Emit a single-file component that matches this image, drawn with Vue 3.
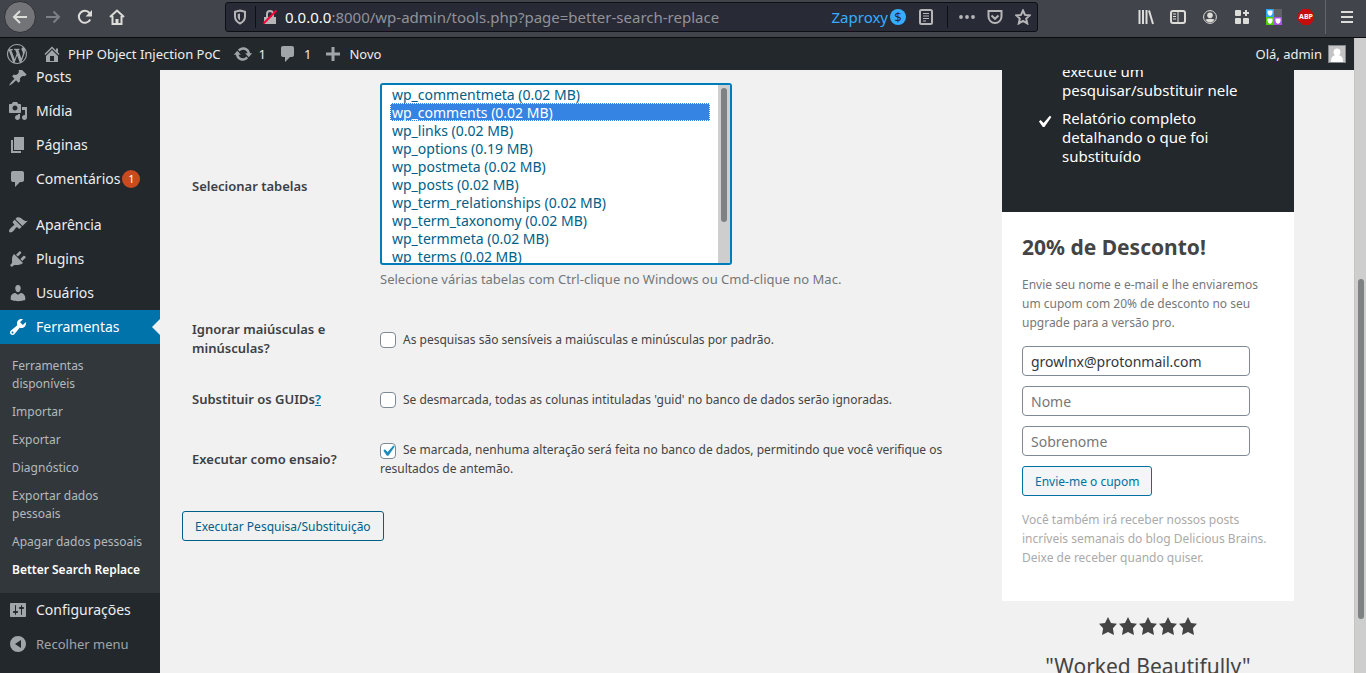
<script setup>
import { ref } from 'vue'

const icons = {
  wordpress: 'M20 10c0-5.51-4.49-10-10-10C4.48 0 0 4.49 0 10c0 5.52 4.48 10 10 10 5.51 0 10-4.48 10-10zM7.78 15.37L4.37 6.22c.55-.02 1.17-.08 1.17-.08.5-.06.44-1.13-.06-1.11 0 0-1.45.11-2.37.11-.18 0-.37 0-.58-.01C4.12 2.69 6.87 1.11 10 1.11c2.33 0 4.45.87 6.05 2.34-.68-.11-1.65.39-1.65 1.58 0 .74.45 1.36.9 2.1.35.61.55 1.36.55 2.46 0 1.49-1.4 5-1.4 5l-3.03-8.37c.54-.02.82-.17.82-.17.5-.05.44-1.25-.06-1.22 0 0-1.44.12-2.38.12-.87 0-2.33-.12-2.33-.12-.5-.03-.56 1.2-.06 1.22l.92.08 1.26 3.41zM17.41 10c.24-.64.74-1.87.43-4.25.7 1.29 1.05 2.71 1.05 4.25 0 3.29-1.73 6.24-4.4 7.78.97-2.59 1.94-5.2 2.92-7.78zM6.1 18.09C3.12 16.65 1.11 13.53 1.11 10c0-1.3.23-2.48.72-3.59C3.25 10.3 4.67 14.2 6.1 18.09zm4.03-6.63l2.58 6.98c-.86.29-1.76.45-2.71.45-.79 0-1.57-.11-2.29-.33.81-2.38 1.62-4.74 2.42-7.1z',
  home: 'M16 8.5l1.53 1.53-1.06 1.06L10 4.6l-6.47 6.49-1.06-1.06L10 2.5l4 4v-2h2v4zm-6-2.46l6 5.99V18H4v-5.97zM12 17v-5H8v5h4z',
  update: 'M10.2 3.28c3.53 0 6.43 2.61 6.92 6h2.08l-3.5 4-3.5-4h2.32c-.45-1.97-2.21-3.45-4.32-3.45-1.45 0-2.73.71-3.54 1.78L4.95 5.66C6.23 4.2 8.11 3.28 10.2 3.28zm-.4 13.44c-3.52 0-6.43-2.61-6.92-6H.8l3.5-4c1.17 1.33 2.33 2.67 3.5 4H5.48c.45 1.97 2.21 3.45 4.32 3.45 1.45 0 2.73-.71 3.54-1.78l1.71 1.95c-1.28 1.46-3.15 2.38-5.25 2.38z',
  comments: 'M5 2h9c1.1 0 2 .9 2 2v7c0 1.1-.9 2-2 2h-2l-5 5v-5H5c-1.1 0-2-.9-2-2V4c0-1.1.9-2 2-2z',
  plus: 'M17 8.5v3h-5.5V17h-3v-5.500H3v-3h5.500V3h3v5.500z',
  post: 'M10.44 3.02l1.82-1.82 6.36 6.35-1.83 1.82c-1.05-.68-2.48-.57-3.41.36l-.75.75c-.92.93-1.04 2.35-.35 3.41l-1.83 1.82-2.41-2.41-2.8 2.79c-.42.42-3.38 2.71-3.8 2.29s1.86-3.39 2.28-3.81l2.79-2.79L4.1 9.36l1.83-1.82c1.05.69 2.48.57 3.4-.36l.75-.75c.93-.92 1.05-2.35.36-3.41z',
  media: 'M13 11V4c0-.55-.45-1-1-1h-1.67L9 1H5L3.67 3H2c-.55 0-1 .45-1 1v7c0 .55.45 1 1 1h10c.55 0 1-.45 1-1zM7 4.500c1.38 0 2.5 1.12 2.5 2.5S8.38 9.500 7 9.500 4.500 8.380 4.500 7 5.620 4.500 7 4.500zM14 6h5v10.500c0 1.380-1.120 2.500-2.500 2.500S14 17.880 14 16.500s1.120-2.500 2.500-2.500c.17 0 .34.02.5.05V9h-3V6zm-4 8.050V13h2v3.500c0 1.380-1.120 2.500-2.500 2.500S7 17.880 7 16.500 8.120 14 9.500 14c.17 0 .34.02.5.05z',
  page: 'M6 15V2h10v13H6zm-1 1h8v2H3V5h2v11z',
  appearance: 'M14.48 11.06L7.41 3.99l1.5-1.5c.5-.56 2.3-.47 3.51.32 1.21.8 1.43 1.28 2.91 2.1 1.18.64 2.45 1.26 4.45.85zm-.71.71L6.7 4.7 4.93 6.47c-.39.39-.39 1.02 0 1.41l1.06 1.06c.39.39.39 1.03 0 1.42-.6.6-1.43 1.11-2.21 1.69-.35.26-.7.53-1.01.84C1.43 14.23.4 16.08 1.4 17.07c.99 1 2.84-.03 4.18-1.36.31-.31.58-.66.85-1.02.57-.78 1.08-1.61 1.69-2.21.39-.39 1.02-.39 1.41 0l1.06 1.06c.39.39 1.02.39 1.41 0z',
  plugins: 'M13.11 4.36L9.87 7.6 8 5.73l3.24-3.24c.35-.34 1.05-.2 1.56.32.52.51.66 1.21.31 1.55zm-8 1.77l.91-1.12 9.01 9.01-1.19.84c-.71.71-2.63 1.16-3.82 1.16H6.14L4.9 17.26c-.59.59-1.54.59-2.12 0-.59-.58-.59-1.53 0-2.12l1.24-1.24v-3.88c0-1.13.4-3.19 1.09-3.89zm7.26 3.97l3.24-3.24c.34-.35 1.04-.21 1.55.31.52.51.66 1.21.31 1.55l-3.24 3.25z',
  users: 'M10 9.25c-2.27 0-2.73-3.44-2.73-3.44C7 4.02 7.82 2 9.97 2c2.16 0 2.98 2.02 2.71 3.81 0 0-.41 3.44-2.68 3.44zm0 2.57L12.72 10c2.39 0 4.52 2.33 4.52 4.53v2.49s-3.65 1.13-7.24 1.13c-3.65 0-7.24-1.13-7.24-1.13v-2.49c0-2.25 1.94-4.48 4.47-4.48z',
  tools: 'M16.68 9.77c-1.34 1.34-3.3 1.67-4.95.99l-5.41 6.52c-.99.99-2.59.99-3.58 0s-.99-2.59 0-3.57l6.52-5.42c-.68-1.65-.35-3.61.99-4.95 1.28-1.28 3.12-1.62 4.72-1.06l-2.89 2.89 2.82 2.82 2.86-2.87c.53 1.58.18 3.39-1.08 4.65zM3.81 16.21c.4.39 1.04.39 1.43 0 .4-.4.4-1.04 0-1.43-.39-.4-1.03-.4-1.43 0-.39.39-.39 1.03 0 1.43z',
  settings: 'M18 16V4c0-.55-.45-1-1-1H3c-.55 0-1 .45-1 1v12c0 .55.45 1 1 1h14c.55 0 1-.45 1-1zM8 11h1c.55 0 1 .45 1 1s-.45 1-1 1H8v1.5c0 .28-.22.5-.5.5s-.5-.22-.5-.5V13H6c-.55 0-1-.45-1-1s.45-1 1-1h1V5.5c0-.28.22-.5.5-.5s.5.22.5.5V11zm5-2h-1c-.55 0-1-.45-1-1s.45-1 1-1h1V5.5c0-.28.22-.5.5-.5s.5.22.5.5V7h1c.55 0 1 .45 1 1s-.45 1-1 1h-1v5.5c0 .28-.22.5-.5.5s-.5-.22-.5-.5V9z',
  collapse: 'M10 2a8 8 0 1 0 0 16 8 8 0 0 0 0-16zM13 6v8l-6-4z',
  star: 'M10 1l3 6 6 .75-4.120 4.620L16 19l-6-3-6 3 1.130-6.630L1 7.750 7 7z',
  check: 'M14.83 4.890l1.340.94-5.810 8.380H9.020L5.780 9.670l1.340-1.250 2.570 2.400z'
}

const menuTop = [
  { label: 'Posts', icon: 'post' },
  { label: 'Mídia', icon: 'media' },
  { label: 'Páginas', icon: 'page' },
  { label: 'Comentários', icon: 'comments', badge: 1 }
]
const menuMiddle = [
  { label: 'Aparência', icon: 'appearance' },
  { label: 'Plugins', icon: 'plugins' },
  { label: 'Usuários', icon: 'users' },
  { label: 'Ferramentas', icon: 'tools', current: true }
]
const submenu = [
  'Ferramentas disponíveis',
  'Importar',
  'Exportar',
  'Diagnóstico',
  'Exportar dados pessoais',
  'Apagar dados pessoais',
  'Better Search Replace'
]
const tables = [
  ['wp_commentmeta', '0.02'],
  ['wp_comments', '0.02'],
  ['wp_links', '0.02'],
  ['wp_options', '0.19'],
  ['wp_postmeta', '0.02'],
  ['wp_posts', '0.02'],
  ['wp_term_relationships', '0.02'],
  ['wp_term_taxonomy', '0.02'],
  ['wp_termmeta', '0.02'],
  ['wp_terms', '0.02']
]

const selectedTables = ref(['wp_comments'])
const caseInsensitive = ref(false)
const replaceGuids = ref(false)
const dryRun = ref(true)
const email = ref('growlnx@protonmail.com')
const firstName = ref('')
const lastName = ref('')
</script>

<template>
  <div class="window">
    <header class="chrome">
      <nav class="chrome-nav" aria-label="Navegação">
        <button class="tool back" type="button" aria-label="Voltar">
          <svg viewBox="0 0 16 16"><path d="M15 8H2M8 2L2 8l6 6" /></svg>
        </button>
        <button class="tool forward" type="button" aria-label="Avançar">
          <svg viewBox="0 0 16 16"><path d="M1 8h13M8.500 2.500L14 8l-5.500 5.500" /></svg>
        </button>
        <button class="tool" type="button" aria-label="Recarregar">
          <svg viewBox="0 0 16 16"><path d="M13.200 10.500A6 6 0 1 1 12.500 4" /><path class="solid" d="M15 1v6.500H8.500z" /></svg>
        </button>
        <button class="tool" type="button" aria-label="Início">
          <svg viewBox="0 0 16 16"><path d="M1 8l7-6.500L15 8M3.500 7v8h9V7" /><path class="solid" d="M6.500 15v-5h3v5z" /></svg>
        </button>
      </nav>

      <div class="urlbar">
        <button class="mini shield" type="button" aria-label="Proteção">
          <svg viewBox="0 0 16 16"><path d="M8 1.500l5 1.300v4.700c0 3.200-2 5.500-5 7-3-1.500-5-3.800-5-7V2.800z" /><path class="solid" d="M8 4.500v7c-1.500-1-2.300-2.300-2.300-4V5z" /></svg>
        </button>
        <span class="rule"></span>
        <button class="mini lock" type="button" aria-label="Conexão não segura">
          <svg viewBox="0 0 16 16"><path class="solid" d="M2 8h12v7H2z" /><path d="M5 8V5a3 3 0 0 1 6 0v3" /><path class="slash" d="M1.500 14.500l13-13" /></svg>
        </button>
        <span class="url"><b>0.0.0.0</b>:8000/wp-admin/tools.php?page=better-search-replace</span>
        <span class="container-name">Zaproxy</span>
        <span class="container-icon">$</span>
        <button class="mini reader" type="button" aria-label="Modo de leitura">
          <svg viewBox="0 0 16 16"><rect x="2" y="1" width="12" height="14" rx="1.500" /><path class="thin" d="M5 4.500h6M5 7h6M5 9.500h6M5 12h3" /></svg>
        </button>
        <span class="rule"></span>
        <button class="mini more" type="button" aria-label="Mais ações">
          <svg viewBox="0 0 16 16"><g class="solid"><circle cx="2" cy="8" r="1.900" /><circle cx="8" cy="8" r="1.900" /><circle cx="14" cy="8" r="1.900" /></g></svg>
        </button>
        <button class="mini" type="button" aria-label="Salvar no Pocket">
          <svg viewBox="0 0 16 16"><path d="M1.500 2h13v5.500a6.500 6.500 0 0 1-13 0z" /><path d="M4.500 6.500L8 9.800l3.500-3.300" /></svg>
        </button>
        <button class="mini" type="button" aria-label="Favoritar">
          <svg viewBox="0 0 16 16"><path d="M8 1.500l2 4.400 4.700.5-3.500 3.200 1 4.800L8 12l-4.200 2.400 1-4.800L1.300 6.400 6 5.900z" /></svg>
        </button>
      </div>

      <div class="chrome-tools">
        <button class="tool" type="button" aria-label="Biblioteca">
          <svg viewBox="0 0 16 16"><path d="M1.500 1v14M5 1v14M8.500 1v14M11 1.500L15 15" /></svg>
        </button>
        <button class="tool" type="button" aria-label="Painel lateral">
          <svg viewBox="0 0 16 16"><rect x="1" y="2" width="14" height="12" rx="2" /><path class="thin" d="M8 2v12M3 5h3M3 7.500h3M3 10h3" /></svg>
        </button>
        <button class="tool" type="button" aria-label="Conta">
          <svg viewBox="0 0 16 16"><circle class="thin" cx="8" cy="8" r="6.400" /><g class="solid"><circle cx="8" cy="6.200" r="2.800" /><path d="M3.500 10.500q4.500-1.600 9 0-1.500 3-4.500 3t-4.500-3z" /></g></svg>
        </button>
        <button class="tool" type="button" aria-label="Extensões">
          <svg viewBox="0 0 16 16"><g class="solid"><rect x="1" y="1" width="6" height="6" rx="1" /><rect x="1" y="9" width="6" height="6" rx="1" /><rect x="9" y="9" width="6" height="6" rx="1" /></g><path d="M12 1v6M9 4h6" /></svg>
        </button>
        <button class="tool" type="button" aria-label="Contêineres">
          <svg viewBox="0 0 16 16" class="flat"><rect width="8" height="8" fill="#2aa6f5" /><rect x="8" width="8" height="8" fill="#606067" /><rect y="8" width="8" height="8" fill="#51cd00" /><rect x="8" y="8" width="8" height="8" fill="#ac51e8" /><g fill="#fff"><path d="M1.500 1.500h5v2.500q0 2-2.500 3-2.500-1-2.500-3z" /><path d="M1.500 9.500h5V12q0 2-2.500 3-2.500-1-2.500-3z" /><path d="M9.500 9.500h5V12q0 2-2.500 3-2.500-1-2.500-3z" /></g></svg>
        </button>
        <button class="tool" type="button" aria-label="Adblock Plus"><span class="abp">ABP</span></button>
        <span class="rule light"></span>
        <button class="tool burger" type="button" aria-label="Menu">
          <svg viewBox="0 0 16 16"><path d="M2 3h12M2 8h12M2 13h12" /></svg>
        </button>
      </div>
    </header>

    <div class="viewport">
      <div class="page">
        <div class="adminbar">
          <a href="#" class="logo" aria-label="Sobre o WordPress"><svg class="dash" viewBox="0 0 20 20"><path :d="icons.wordpress" /></svg></a>
          <a href="#"><svg class="dash" viewBox="0 0 20 20"><path :d="icons.home" /></svg>PHP Object Injection PoC</a>
          <a href="#"><svg class="dash" viewBox="0 0 20 20"><path :d="icons.update" /></svg>1</a>
          <a href="#"><svg class="dash" viewBox="0 0 20 20"><path :d="icons.comments" /></svg>1</a>
          <a href="#"><svg class="dash" viewBox="0 0 20 20"><path :d="icons.plus" /></svg>Novo</a>
          <a href="#" class="account">Olá, admin
            <svg class="avatar" viewBox="0 0 16 16"><rect width="16" height="16" fill="#c4c4c4" /><path fill="#fff" d="M8 2.500a3.400 3.400 0 0 1 3.400 3.500c0 1.400-.6 2.600-1.400 3.300 2.600.6 4 2.400 4 6.700H2c0-4.300 1.400-6.100 4-6.700-.8-.7-1.400-1.900-1.400-3.300A3.400 3.400 0 0 1 8 2.500z" /></svg>
          </a>
        </div>

        <div class="columns">
          <nav class="menu" aria-label="Menu principal">
            <a v-for="item in menuTop" :key="item.label" href="#" class="item">
              <svg class="dash" viewBox="0 0 20 20"><path :d="icons[item.icon]" /></svg>{{ item.label }}
              <span v-if="item.badge" class="badge">{{ item.badge }}</span>
            </a>
            <div class="separator"></div>
            <a v-for="item in menuMiddle" :key="item.label" href="#" class="item" :class="{ current: item.current }">
              <svg class="dash" viewBox="0 0 20 20"><path :d="icons[item.icon]" /></svg>{{ item.label }}
            </a>
            <div class="submenu">
              <a v-for="name in submenu" :key="name" href="#" :class="{ active: name === 'Better Search Replace' }">{{ name }}</a>
            </div>
            <a href="#" class="item"><svg class="dash" viewBox="0 0 20 20"><path :d="icons.settings" /></svg>Configurações</a>
            <button type="button" class="item collapse"><svg class="dash" viewBox="0 0 20 20"><path fill-rule="evenodd" :d="icons.collapse" /></svg>Recolher menu</button>
          </nav>

          <form class="form" @submit.prevent>
            <div class="row tall">
              <label class="heading" for="tables">Selecionar tabelas</label>
              <div>
                <div class="listbox">
                  <select id="tables" v-model="selectedTables" multiple size="10">
                    <option v-for="[name, size] in tables" :key="name" :value="name">{{ name }} ({{ size }} MB)</option>
                  </select>
                  <div class="list-track"><span class="thumb"></span></div>
                </div>
                <p class="description">Selecione várias tabelas com Ctrl-clique no Windows ou Cmd-clique no Mac.</p>
              </div>
            </div>
            <div class="row">
              <label class="heading" for="case">Ignorar maiúsculas e minúsculas?</label>
              <div>
                <span class="tick"><input id="case" v-model="caseInsensitive" type="checkbox" /></span>
                <label for="case">As pesquisas são sensíveis a maiúsculas e minúsculas por padrão.</label>
              </div>
            </div>
            <div class="row">
              <span class="heading"><label for="guid">Substituir os GUIDs</label><a href="#">?</a></span>
              <div>
                <span class="tick"><input id="guid" v-model="replaceGuids" type="checkbox" /></span>
                <label for="guid">Se desmarcada, todas as colunas intituladas 'guid' no banco de dados serão ignoradas.</label>
              </div>
            </div>
            <div class="row">
              <label class="heading" for="dry">Executar como ensaio?</label>
              <div>
                <span class="tick"><input id="dry" v-model="dryRun" type="checkbox" /><svg v-if="dryRun" viewBox="0 0 20 20"><path :d="icons.check" /></svg></span>
                <label for="dry">Se marcada, nenhuma alteração será feita no banco de dados, permitindo que você verifique os resultados de antemão.</label>
              </div>
            </div>
            <button class="button run" type="submit">Executar Pesquisa/Substituição</button>
          </form>

          <aside class="promo">
            <ul class="features">
              <li>execute um pesquisar/substituir nele</li>
              <li><svg viewBox="0 0 20 20"><path :d="icons.check" /></svg>Relatório completo detalhando o que foi substituído</li>
            </ul>
            <form class="coupon" @submit.prevent>
              <h2>20% de Desconto!</h2>
              <p>Envie seu nome e e-mail e lhe enviaremos um cupom com 20% de desconto no seu upgrade para a versão pro.</p>
              <input v-model="email" type="email" aria-label="E-mail" />
              <input v-model="firstName" type="text" placeholder="Nome" aria-label="Nome" />
              <input v-model="lastName" type="text" placeholder="Sobrenome" aria-label="Sobrenome" />
              <button class="button" type="submit">Envie-me o cupom</button>
              <p class="small">Você também irá receber nossos posts incríveis semanais do blog Delicious Brains. Deixe de receber quando quiser.</p>
            </form>
            <div class="stars">
              <svg v-for="n in 5" :key="n" viewBox="0 0 20 20"><path :d="icons.star" /></svg>
            </div>
            <p class="quote">"Worked Beautifully"</p>
          </aside>
        </div>
      </div>
      <div class="page-track"><span class="thumb"></span></div>
    </div>
  </div>
</template>

<style>
html,
body {
  overflow: hidden;
}
</style>

<style scoped>
* {
  box-sizing: border-box;
}
.window {
  height: 100vh;
  display: flex;
  flex-direction: column;
  overflow: hidden;
  font: 12px/19px "Noto Sans", sans-serif;
  color: #444;
  background: #f1f1f1;
}
a {
  color: inherit;
  text-decoration: none;
}
button,
input,
select {
  font-family: inherit;
  margin: 0;
}
p,
h2,
ul {
  margin: 0;
  padding: 0;
}

/* browser toolbar */
.chrome {
  flex: none;
  height: 38px;
  display: flex;
  background: #42444c;
  border-bottom: 1px solid #0c0c0d;
  padding-bottom: 3px;
}
.chrome-nav {
  width: 225px;
  flex: none;
  display: flex;
  align-items: center;
  padding-left: 4px;
}
.tool {
  width: 32px;
  height: 32px;
  padding: 0;
  border: 0;
  border-radius: 50%;
  background: none;
  display: flex;
  align-items: center;
  justify-content: center;
  color: #dcdcd8;
}
.tool svg,
.mini svg {
  width: 16px;
  height: 16px;
  fill: none;
  stroke: currentColor;
  stroke-width: 2;
}
.tool svg .solid,
.mini svg .solid {
  fill: currentColor;
  stroke: none;
}
.tool svg .thin,
.mini svg .thin {
  stroke-width: 1;
}
.tool svg.flat {
  stroke: none;
}
.tool.back {
  background: #737478;
  border: 1px solid #303136;
  margin-right: 1px;
}
.tool.forward {
  color: #7f8085;
}
.urlbar {
  flex: 1;
  min-width: 0;
  height: 30px;
  margin-top: 2px;
  padding-left: 6px;
  display: flex;
  align-items: center;
  background: #282a36;
  border: 1px solid #0e0f14;
  border-radius: 3px;
}
.mini {
  width: 28px;
  height: 24px;
  padding: 0;
  border: 0;
  background: none;
  display: flex;
  align-items: center;
  justify-content: center;
  color: #b6b6b8;
  flex: none;
}
.mini.shield {
  width: 16px;
  margin-right: 7px;
}
.mini.lock svg .slash {
  stroke: #ff0039;
}
.mini.reader {
  margin: 0 7px 0 6px;
}
.mini.more {
  margin-left: 5px;
}
.rule {
  width: 1px;
  height: 22px;
  background: #0e0f14;
  flex: none;
}
.url {
  flex: 1;
  min-width: 0;
  overflow: hidden;
  white-space: nowrap;
  margin-left: 1px;
  font-size: 15px;
  line-height: 24px;
  color: #929299;
}
.url b {
  font-weight: 400;
  color: #f9f9fa;
}
.container-name {
  font-size: 15px;
  color: #37adff;
}
.container-icon {
  width: 16px;
  height: 16px;
  margin-left: 2px;
  border-radius: 50%;
  background: #37adff;
  color: #282a36;
  font-size: 13px;
  line-height: 16px;
  text-align: center;
}
.chrome-tools {
  width: 328px;
  flex: none;
  display: flex;
  align-items: center;
  padding-left: 92px;
}
.rule.light {
  align-self: flex-start;
  margin: 0 5px 0 3px;
  height: 34px;
  background: #64666d;
}
.abp {
  width: 16px;
  height: 16px;
  background: #c70d09;
  clip-path: polygon(30% 0, 70% 0, 100% 30%, 100% 70%, 70% 100%, 30% 100%, 0 70%, 0 30%);
  color: #fff;
  font-size: 7px;
  font-weight: 700;
  line-height: 16px;
}

/* page frame */
.viewport {
  flex: 1;
  min-height: 0;
  display: flex;
}
.page {
  flex: 1;
  min-width: 0;
  display: flex;
  flex-direction: column;
}
.page-track {
  width: 12px;
  flex: none;
  display: grid;
  grid-template-rows: 241fr 340fr 54fr;
  justify-content: center;
  background: #cecece;
  border-left: 1px solid #c8c4bf;
}
.thumb {
  grid-row: 2;
  width: 6px;
  border-radius: 3px;
  background: #7e8282;
}
.dash {
  width: 20px;
  height: 20px;
  flex: none;
  fill: #a0a5aa;
}
.adminbar {
  flex: none;
  height: 32px;
  padding: 0 8px 0 7px;
  display: flex;
  align-items: center;
  gap: 12px;
  background: #23282d;
  color: #eee;
  font-size: 13px;
}
.adminbar a {
  display: flex;
  align-items: center;
  gap: 6px;
}
.adminbar .logo {
  margin-right: 3px;
}
.adminbar .account {
  margin-left: auto;
}
.avatar {
  width: 18px;
  height: 18px;
  border: 1px solid #82878c;
}
.columns {
  flex: 1;
  min-height: 0;
  display: flex;
  overflow: hidden;
}

/* admin menu */
.menu {
  width: 160px;
  flex: none;
  background: #23282d;
  color: #eee;
  font-size: 14px;
}
.menu::before {
  content: "";
  display: block;
  margin-top: -10px;
}
.item {
  width: 100%;
  height: 34px;
  padding: 0 8px 1px;
  display: flex;
  align-items: center;
  gap: 8px;
}
.badge {
  min-width: 18px;
  height: 18px;
  margin-left: -6px;
  border-radius: 9px;
  background: #ca4a1f;
  color: #fff;
  font-size: 11px;
  line-height: 18px;
  text-align: center;
}
.separator {
  height: 12px;
}
.item.current {
  position: relative;
  background: #0073aa;
  color: #fff;
}
.item.current .dash {
  fill: #fff;
}
.item.current::after {
  content: "";
  position: absolute;
  right: 0;
  top: 9px;
  border: 8px solid transparent;
  border-left: 0;
  border-right-color: #f1f1f1;
}
.submenu {
  padding: 8px 0 9px;
  background: #32373c;
  color: #b4b9be;
  font-size: 12px;
  line-height: 18px;
}
.submenu a {
  display: block;
  padding: 5px 12px;
}
.submenu a.active {
  color: #fff;
  font-weight: 600;
}
.collapse {
  border: 0;
  background: none;
  font-size: 13px;
  color: #a0a5aa;
}

/* search and replace form */
.form {
  flex: 1;
  min-width: 0;
  padding: 0 20px 0 22px;
}
.row {
  min-height: 60px;
  padding: 11px 10px;
  display: grid;
  grid-template-columns: 148px minmax(0, 1fr);
  column-gap: 40px;
  align-items: center;
}
.row.tall {
  margin-top: -5px;
  padding: 18px 10px 19px;
}
.heading {
  font-size: 13px;
  font-weight: 600;
  color: #3c4045;
}
.heading a {
  color: #0073aa;
  text-decoration: underline;
}
.listbox {
  width: 352px;
  max-width: 100%;
  height: 182px;
  display: flex;
  border: 2px solid #007cba;
  border-radius: 3px;
  background: #fff;
  overflow: hidden;
}
.listbox select {
  flex: 1;
  min-width: 0;
  height: 178px;
  padding: 0 8px;
  border: 0;
  outline: 0;
  background: #fff;
  color: #016087;
  font-size: 14px;
  scrollbar-width: none;
}
.listbox option {
  min-height: 18px;
  height: 18px;
  padding: 0 2px;
  line-height: 18px;
}
.listbox option:checked {
  background: linear-gradient(#3584e4, #3584e4);
  -webkit-text-fill-color: #fff;
  outline: 1px dotted #fff;
  outline-offset: -1px;
}
.list-track {
  width: 12px;
  display: grid;
  grid-template-rows: 3px 134px;
  justify-content: center;
  background: #cecece;
}
.description {
  margin-top: 4px;
  padding-bottom: 1px;
  font-size: 13px;
  line-height: 20px;
  color: #72777c;
}
.tick {
  position: relative;
  display: inline-block;
  width: 16px;
  height: 16px;
  margin-right: 4px;
  vertical-align: middle;
}
.tick + label {
  padding-left: 3px;
}
.tick input {
  appearance: none;
  display: block;
  width: 16px;
  height: 16px;
  border: 1px solid #7e8993;
  border-radius: 4px;
  background: #fff;
}
.tick svg {
  position: absolute;
  inset: -3px;
  width: 22px;
  height: 22px;
  fill: #1e8cbe;
  pointer-events: none;
}
.button {
  height: 30px;
  padding: 0 12px;
  border: 1px solid #0071a1;
  border-radius: 3px;
  background: #f3f5f6;
  color: #0071a1;
  font-size: 12px;
}
.run {
  margin-top: 22px;
  border-color: #016087;
  background: #f1f1f1;
  color: #016087;
}

/* promo column */
.promo {
  width: 292px;
  flex: none;
  margin-right: 60px;
}
.features {
  margin-top: -10px;
  padding: 2px 40px 46px 60px;
  list-style: none;
  background: #23282d;
  color: #fff;
  font-size: 15px;
}
.features li {
  position: relative;
}
.features li + li {
  margin-top: 9px;
}
.features svg {
  position: absolute;
  left: -30px;
  top: 1px;
  width: 24px;
  height: 24px;
  fill: #fff;
}
.coupon {
  padding: 19px 18px 20px 20px;
  background: #fff;
  color: #777;
}
.coupon h2 {
  margin-bottom: 12px;
  font-size: 21px;
  line-height: 32px;
  color: #444;
}
.coupon input {
  display: block;
  width: 228px;
  height: 30px;
  margin-bottom: 10px;
  padding: 0 8px;
  border: 1px solid #7e8993;
  border-radius: 4px;
  background: #fff;
  color: #32373c;
  font-size: 14px;
}
.coupon p {
  margin-bottom: 14px;
}
.coupon input::placeholder {
  color: #777;
}
.coupon .small {
  margin-top: 14px;
  color: #aaa;
}
.stars {
  display: flex;
  justify-content: center;
  padding-top: 15px;
}
.stars svg {
  width: 20px;
  height: 20px;
  fill: #444;
}
.quote {
  margin-top: 14px;
  font-size: 21px;
  line-height: 32px;
  text-align: center;
}
</style>
